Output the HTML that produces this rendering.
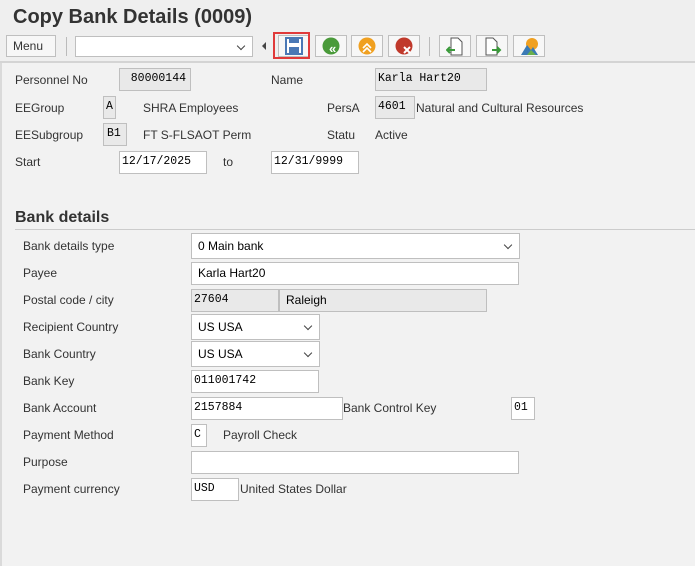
<!DOCTYPE html>
<html><head><style>
body{margin:0;width:695px;height:566px;overflow:hidden;background:#f2f2f2;font-family:"Liberation Sans",Arial,sans-serif;font-size:12px;color:#333;position:relative}
.a{position:absolute}
.lbl{position:absolute;font-size:12px;color:#333;line-height:14px}
.box{position:absolute;box-sizing:border-box;border:1px solid #bfbfbf;background:#fff;font-size:12px;line-height:20px;padding-left:6px;color:#000}
.ro{background:#e9e9e9;font-family:"Liberation Mono",monospace;font-size:11.5px}
.mono{font-family:"Liberation Mono",monospace;font-size:11.5px}
.btn{position:absolute;top:35px;width:32px;height:22px;box-sizing:border-box;border:1px solid #bfbfbf;background:#f7f7f7}
.chev{position:absolute;right:8px;top:5px;width:5px;height:5px;border-right:1.5px solid #444;border-bottom:1.5px solid #444;transform:rotate(45deg)}
</style></head><body>
<div class="a" style="left:0;top:0;width:695px;height:62px;background:#efefef"></div>
<div class="a" style="left:13px;top:6px;font-size:20px;font-weight:bold;color:#333">Copy Bank Details (0009)</div>
<div class="a" style="left:6px;top:35px;width:50px;height:22px;box-sizing:border-box;border:1px solid #bfbfbf;background:#f7f7f7;font-size:12px;line-height:20px;padding-left:6px">Menu</div>
<div class="a" style="left:66px;top:37px;width:1px;height:19px;background:#bbb"></div>
<div class="box" style="left:75px;top:36px;width:178px;height:21px"><div class="chev" style="top:6px"></div></div>
<div class="a" style="left:262px;top:42px;width:0;height:0;border-top:4px solid transparent;border-bottom:4px solid transparent;border-right:4px solid #444"></div>
<div class="btn" style="left:278px"></div>
<div class="a" style="left:273px;top:32px;width:37px;height:27px;box-sizing:border-box;border:2px solid #e03a3a"></div>
<svg class="a" style="left:285px;top:37px" width="18" height="18"><rect x="1" y="1" width="16" height="16" fill="#fff" stroke="#4a78b5" stroke-width="2"/><rect x="4" y="1" width="10" height="5" fill="#4a78b5"/><rect x="4" y="10" width="10" height="7" fill="#4a78b5"/></svg>
<div class="btn" style="left:315px"></div><svg class="a" style="left:322px;top:37px" width="19" height="19"><circle cx="9" cy="9" r="8.5" fill="#4a9a3a"/><text x="7" y="16" font-size="13" fill="#fff" font-weight="bold">«</text></svg>
<div class="btn" style="left:351px"></div><svg class="a" style="left:358px;top:37px" width="19" height="19"><circle cx="9" cy="9" r="8.5" fill="#f0a020"/><path d="M5 11l4-4 4 4M5 15l4-4 4 4" stroke="#fff" stroke-width="1.6" fill="none"/></svg>
<div class="btn" style="left:388px"></div><svg class="a" style="left:395px;top:37px" width="19" height="19"><circle cx="9" cy="9" r="8.5" fill="#c0392b"/><path d="M9 10l6 6M15 10l-6 6" stroke="#fff" stroke-width="2"/></svg>
<div class="a" style="left:429px;top:37px;width:1px;height:19px;background:#bbb"></div>
<div class="btn" style="left:439px"></div><svg class="a" style="left:446px;top:37px" width="19" height="19"><path d="M5 1h7l4 4v13H5z" fill="#fff" stroke="#555"/><path d="M1 13h8M4 10l-3 3 3 3" stroke="#3a9a3a" stroke-width="2" fill="none"/></svg>
<div class="btn" style="left:476px"></div><svg class="a" style="left:483px;top:37px" width="19" height="19"><path d="M3 1h7l4 4v13H3z" fill="#fff" stroke="#555"/><path d="M9 13h8M14 10l3 3-3 3" stroke="#3a9a3a" stroke-width="2" fill="none"/></svg>
<div class="btn" style="left:513px"></div><svg class="a" style="left:520px;top:37px" width="19" height="19"><circle cx="12" cy="7" r="6" fill="#f0a020"/><path d="M1 18l6-10 4 5 2-3 5 8z" fill="#3a7ab5"/><path d="M7 18l4-5 5 5z" fill="#6ab04c"/></svg>
<div class="a" style="left:0;top:61px;width:695px;height:2px;background:#d4d4d4"></div>
<div class="a" style="left:0;top:63px;width:2px;height:503px;background:#dadada"></div>

<div class="lbl" style="left:15px;top:73px">Personnel No</div>
<div class="box ro" style="left:119px;top:68px;width:72px;height:23px;text-align:right;padding-right:4px">80000144</div>
<div class="lbl" style="left:271px;top:73px">Name</div>
<div class="box ro" style="left:375px;top:68px;width:112px;height:23px;padding-left:2px">Karla Hart20</div>
<div class="lbl" style="left:15px;top:101px">EEGroup</div>
<div class="box ro" style="left:103px;top:96px;width:13px;height:23px;padding-left:2px">A</div>
<div class="lbl" style="left:143px;top:101px">SHRA Employees</div>
<div class="lbl" style="left:327px;top:101px">PersA</div>
<div class="box ro" style="left:375px;top:96px;width:40px;height:23px;padding-left:2px">4601</div>
<div class="lbl" style="left:416px;top:101px">Natural and Cultural Resources</div>
<div class="lbl" style="left:15px;top:128px">EESubgroup</div>
<div class="box ro" style="left:103px;top:123px;width:24px;height:23px;padding-left:3px">B1</div>
<div class="lbl" style="left:143px;top:128px">FT S-FLSAOT Perm</div>
<div class="lbl" style="left:327px;top:128px">Statu</div>
<div class="lbl" style="left:375px;top:128px">Active</div>
<div class="lbl" style="left:15px;top:155px">Start</div>
<div class="box mono" style="left:119px;top:151px;width:88px;height:23px;padding-left:2px">12/17/2025</div>
<div class="lbl" style="left:223px;top:155px">to</div>
<div class="box mono" style="left:271px;top:151px;width:88px;height:23px;padding-left:2px">12/31/9999</div>

<div class="a" style="left:15px;top:209px;font-size:16px;font-weight:bold;color:#333">Bank details</div>
<div class="a" style="left:15px;top:229px;width:680px;height:1px;background:#ccc"></div>

<div class="lbl" style="left:23px;top:239px">Bank details type</div>
<div class="box" style="left:191px;top:233px;width:329px;height:26px;line-height:24px">0 Main bank<div class="chev" style="top:8px"></div></div>
<div class="lbl" style="left:23px;top:266px">Payee</div>
<div class="box" style="left:191px;top:262px;width:328px;height:23px">Karla Hart20</div>
<div class="lbl" style="left:23px;top:293px">Postal code / city</div>
<div class="box ro" style="left:191px;top:289px;width:88px;height:23px;padding-left:2px">27604</div>
<div class="box" style="left:279px;top:289px;width:208px;height:23px;background:#e9e9e9">Raleigh</div>
<div class="lbl" style="left:23px;top:320px">Recipient Country</div>
<div class="box" style="left:191px;top:314px;width:129px;height:26px;line-height:24px">US USA<div class="chev" style="top:8px"></div></div>
<div class="lbl" style="left:23px;top:347px">Bank Country</div>
<div class="box" style="left:191px;top:341px;width:129px;height:26px;line-height:24px">US USA<div class="chev" style="top:8px"></div></div>
<div class="lbl" style="left:23px;top:374px">Bank Key</div>
<div class="box mono" style="left:191px;top:370px;width:128px;height:23px;padding-left:2px">011001742</div>
<div class="lbl" style="left:23px;top:401px">Bank Account</div>
<div class="box mono" style="left:191px;top:397px;width:152px;height:23px;padding-left:2px">2157884</div>
<div class="lbl" style="left:343px;top:401px">Bank Control Key</div>
<div class="box mono" style="left:511px;top:397px;width:24px;height:23px;padding-left:2px">01</div>
<div class="lbl" style="left:23px;top:428px">Payment Method</div>
<div class="box mono" style="left:191px;top:424px;width:16px;height:23px;padding-left:2px">C</div>
<div class="lbl" style="left:223px;top:428px">Payroll Check</div>
<div class="lbl" style="left:23px;top:455px">Purpose</div>
<div class="box" style="left:191px;top:451px;width:328px;height:23px"></div>
<div class="lbl" style="left:23px;top:482px">Payment currency</div>
<div class="box mono" style="left:191px;top:478px;width:48px;height:23px;padding-left:2px">USD</div>
<div class="lbl" style="left:240px;top:482px">United States Dollar</div>
</body></html>
